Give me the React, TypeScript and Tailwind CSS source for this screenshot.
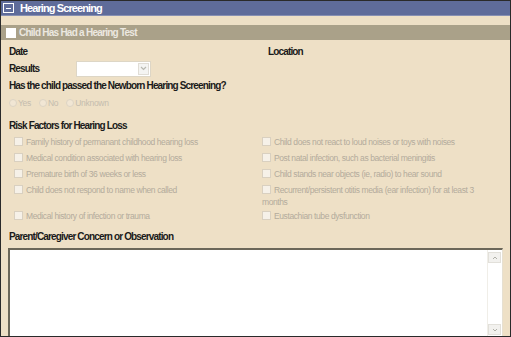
import React from "react";

const leftRisks = [
  "Family history of permanant childhood hearing loss",
  "Medical condition associated with hearing loss",
  "Premature birth of 36 weeks or less",
  "Child does not respond to name when called",
  "Medical history of infection or trauma",
];

const rightRisks = [
  "Child does not react to loud noises or toys with noises",
  "Post natal infection, such as bacterial meningitis",
  "Child stands near objects (ie, radio) to hear sound",
  "Recurrent/persistent otitis media (ear infection) for at least 3 months",
  "Eustachian tube dysfunction",
];

function Box() {
  return (
    <span className="inline-block w-[9px] h-[9px] bg-[#f6f1e8] border border-[#d9d0c0] align-[-1px] mr-[3px]" />
  );
}

function RiskItem({ label, tall }: { label: string; tall?: boolean }) {
  return (
    <div className={`${tall ? "h-[26px]" : "h-[16px]"} pt-[2px] leading-[12px] text-[8.5px] tracking-[-0.4px] text-[#b3ab9c]`}>
      <Box />
      {label}
    </div>
  );
}

function Radio({ label }: { label: string }) {
  return (
    <span className="flex items-center mr-[8px]">
      <span className="w-[8px] h-[8px] rounded-full border border-[#ddd4c4] bg-[#f1e6d4] mr-[1px]" />
      <span>{label}</span>
    </span>
  );
}

export default function App() {
  return (
    <div
      className="w-[511px] h-[337px] border border-[#2a2a2a] bg-[#eee0c6] flex flex-col overflow-hidden"
      style={{ fontFamily: '"Liberation Sans", Arial, sans-serif' }}
    >
      <div className="h-[15px] bg-[#5f6c9a] border-b border-[#8790b3] flex items-center pl-[2px]">
        <span className="w-[11px] h-[10px] border border-white flex items-center justify-center mr-[6px]">
          <span className="w-[5px] h-[1px] bg-white" />
        </span>
        <span className="text-white font-bold text-[11px] tracking-[-0.9px] leading-none">Hearing Screening</span>
      </div>
      <div className="h-[9px]" />
      <div className="h-[15px] bg-[#aaa189] flex items-center pl-[5px]">
        <span className="w-[10px] h-[10px] bg-white mr-[3px]" />
        <span className="text-[#ece8e0] font-bold text-[10px] tracking-[-0.75px]">Child Has Had a Hearing Test</span>
      </div>

      <div className="flex-1 flex flex-col px-[7px] text-[#1a1a1a] font-bold text-[10px] tracking-[-0.85px]">
        <div className="mt-[4px] h-[14px] flex items-center">
          <span className="w-[260px] pl-[1px]">Date</span>
          <span>Location</span>
        </div>
        <div className="mt-[2px] h-[17px] flex items-center">
          <span className="w-[68px] pl-[1px]">Results</span>
          <div className="w-[75px] h-[16px] bg-white border border-[#ddd6c6] flex justify-end items-center pr-[1px]">
            <span className="w-[11px] h-[12px] bg-[#f4f4f2] border border-[#e0ddd6] flex items-center justify-center">
              <svg width="7" height="5" viewBox="0 0 7 5">
                <path d="M1 1 L3.5 3.5 L6 1" stroke="#b8b8b0" strokeWidth="1.2" fill="none" />
              </svg>
            </span>
          </div>
        </div>
        <div className="mt-[1px] h-[14px] flex items-center pl-[1px]">
          Has the child passed the Newborn Hearing Screening?
        </div>
        <div className="mt-[4px] h-[14px] flex items-center pl-[1px] font-normal text-[8.5px] tracking-[-0.3px] text-[#c4bcae]">
          <Radio label="Yes" />
          <Radio label="No" />
          <Radio label="Unknown" />
        </div>
        <div className="mt-[8px] h-[14px] flex items-center pl-[1px]">Risk Factors for Hearing Loss</div>
        <div className="mt-[2px] flex font-normal">
          <div className="w-[251px] pl-[6px]">
            {leftRisks.map((r, i) => (
              <RiskItem key={i} label={r} tall={i === 3} />
            ))}
          </div>
          <div className="w-[232px] pl-[3px]">
            {rightRisks.map((r, i) => (
              <RiskItem key={i} label={r} tall={i === 3} />
            ))}
          </div>
        </div>
        <div className="mt-[5px] h-[14px] flex items-center pl-[1px]">Parent/Caregiver Concern or Observation</div>
        <div className="mt-[5px] flex-1 -mb-[1px] bg-white border-t-2 border-l-2 border-[#6b6759] border-r border-r-[#e6e0d2] flex justify-end">
          <div className="w-[14px] flex flex-col justify-between py-[2px] mr-[1px] border-l border-[#f0eee8]">
            <span className="h-[11px] bg-[#f2f1ee] border border-[#e2e0da] flex items-center justify-center">
              <svg width="6" height="4" viewBox="0 0 6 4">
                <path d="M1 3 L3 1 L5 3" stroke="#b0b0a8" strokeWidth="1" fill="none" />
              </svg>
            </span>
            <span className="h-[11px] bg-[#f2f1ee] border border-[#e2e0da] flex items-center justify-center">
              <svg width="6" height="4" viewBox="0 0 6 4">
                <path d="M1 1 L3 3 L5 1" stroke="#b0b0a8" strokeWidth="1" fill="none" />
              </svg>
            </span>
          </div>
        </div>
      </div>
    </div>
  );
}
